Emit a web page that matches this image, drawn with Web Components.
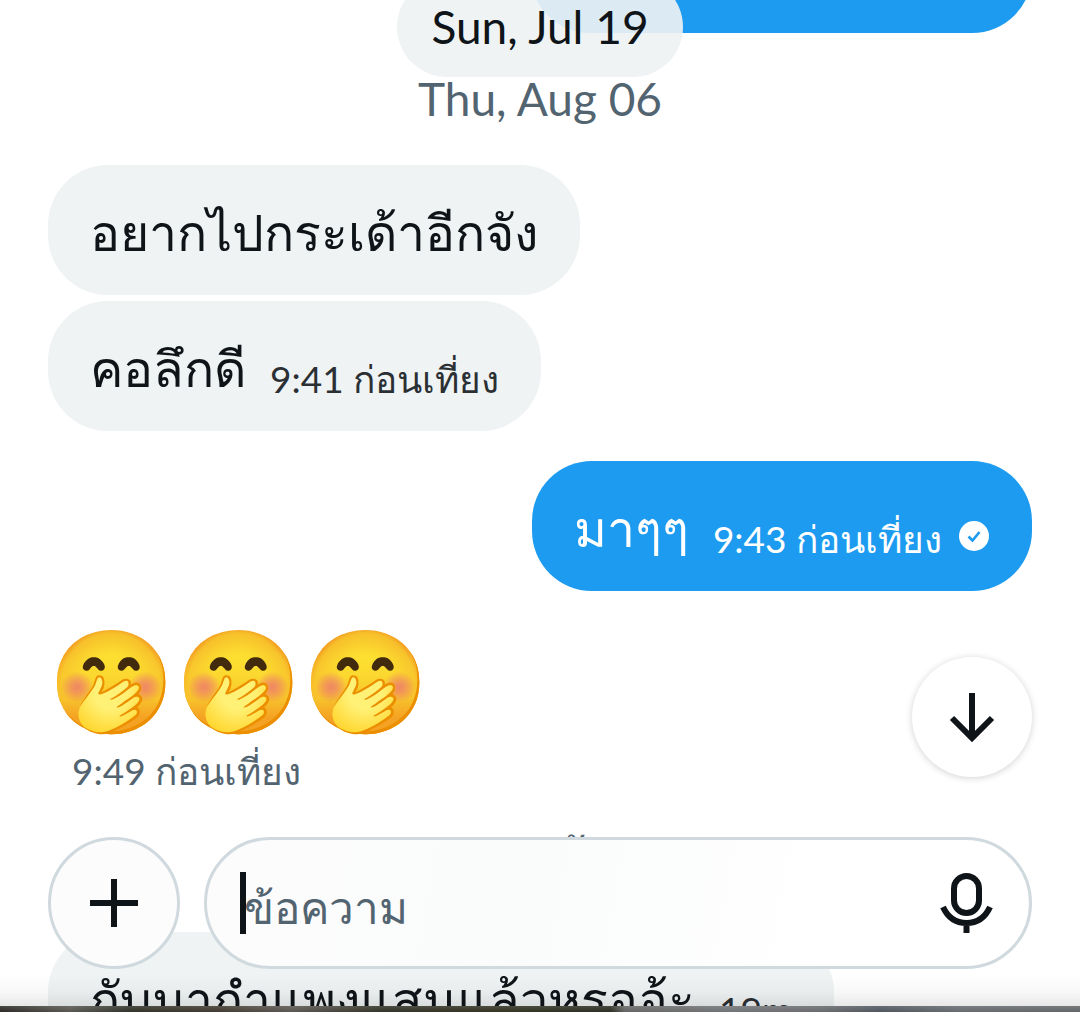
<!DOCTYPE html>
<html lang="th">
<head>
<meta charset="utf-8">
<meta name="viewport" content="width=device-width, initial-scale=1">
<title>ข้อความ</title>
<style>
  html, body { margin: 0; height: 100%; }
  body {
    font-family: Lato, sans-serif;
    --ink: #0f1419;
    --muted: #536471;
    --line: #cfd9de;
    --received: #eff3f4;
    --sent: #1d9bf0;
    color: var(--ink);
    background: #fff;
  }
</style>
</head>
<body>
<chat-screen>
  <chat-bubble sent class="previous"></chat-bubble>
  <day-label>Thu, Aug 06</day-label>
  <chat-bubble>อยากไปกระเด้าอีกจัง</chat-bubble>
  <chat-bubble time="9:41 ก่อนเที่ยง">คอลึกดี</chat-bubble>
  <chat-bubble sent time="9:43 ก่อนเที่ยง">มาๆๆ</chat-bubble>
  <emoji-message time="9:49 ก่อนเที่ยง">🤭🤭🤭</emoji-message>
  <day-label>วันนี้</day-label>
  <chat-bubble time="19m">กับมากำแพงแสนแล้วหรออ้ะ</chat-bubble>
  <floating-date slot="overlay">Sun, Jul 19</floating-date>
  <scroll-button slot="overlay"></scroll-button>
  <message-composer slot="overlay"></message-composer>
</chat-screen>

<script>
function define(name, markup, setup) {
  const template = document.createElement('template');
  template.innerHTML = markup;
  customElements.define(name, class extends HTMLElement {
    connectedCallback() {
      if (this.shadowRoot) return;
      const root = this.attachShadow({ mode: 'open' });
      root.append(template.content.cloneNode(true));
      if (setup) setup(this, root);
    }
  });
}

define('chat-screen', `
  <style>
    :host { display: block; position: relative; height: 100vh; overflow: hidden; background: #fff; }
    .thread { display: flex; flex-direction: column; align-items: flex-start; gap: 6px; padding: 0 48px; }
    .thread ::slotted([sent]) { align-self: flex-end; margin: 24px 0; }
    .thread ::slotted(.previous) { margin: -97px 0 0; width: 51%; }
    .thread ::slotted(day-label) { align-self: stretch; margin: -6px 0; }
    .shade, .photo { position: absolute; left: 0; right: 0; bottom: 0; }
    .shade { height: 38px; background: linear-gradient(rgba(0,0,0,0), rgba(0,0,0,.03) 50%, rgba(0,0,0,.12)); }
    .photo { height: 6px; background:
      linear-gradient(rgba(255,255,255,.16), rgba(255,255,255,.04)),
      linear-gradient(90deg, #24221d 0, #51504a 70px, #292a20 130px, #3b3329 220px, #54504a 290px,
        #2b2c1f 380px, #2b2c1a 500px, #24261a 610px, #5f605e 625px, #6c6d70 730px, #646568 820px,
        #485058 880px, #60656a 960px, #5d5f61 100%); }
  </style>
  <main class="thread"><slot></slot></main>
  <div class="shade"></div>
  <slot name="overlay"></slot>
  <div class="photo"></div>`);

define('day-label', `
  <style>
    :host { display: flex; align-items: center; justify-content: center; height: 132px;
      font-size: 46px; line-height: 56px; color: var(--muted); }
  </style>
  <slot></slot>`);

define('chat-bubble', `
  <style>
    :host { display: flex; box-sizing: border-box; align-items: flex-end; gap: 24px; height: 130px;
      padding: 0 42px 28px; border-radius: 60px; background: var(--received); white-space: nowrap; }
    :host([sent]) { background: var(--sent); color: #fff; }
    .text { font-size: 50px; line-height: 70px; }
    .meta { display: flex; align-items: center; gap: 16px; font-size: 37px; line-height: 48px; opacity: .88; }
    :host([sent]) .meta { opacity: 1; }
    svg { width: 32px; height: 32px; margin-bottom: 6px; }
    [hidden] { display: none; }
  </style>
  <span class="text"><slot></slot></span>
  <span class="meta" hidden><time></time>
    <svg viewBox="0 0 32 32" role="img" aria-label="ส่งแล้ว">
      <circle cx="16" cy="16" r="15" fill="#fff"/>
      <path d="M10.500 16.500l4 4 7-8.500" fill="none" stroke="#1d9bf0" stroke-width="2.600"/>
    </svg></span>`,
  (host, root) => {
    const time = host.getAttribute('time');
    root.querySelector('.meta').hidden = !time;
    root.querySelector('time').textContent = time || '';
    if (!host.hasAttribute('sent')) root.querySelector('svg').remove();
  });

define('emoji-message', `
  <style>
    :host { display: flex; flex-direction: column; gap: 10px; height: 179px; white-space: nowrap; }
    .emoji { font-size: 102px; line-height: 116px; }
    time { padding-left: 24px; font-size: 37px; line-height: 48px; color: var(--muted); }
  </style>
  <span class="emoji"><slot></slot></span><time></time>`,
  (host, root) => { root.querySelector('time').textContent = host.getAttribute('time'); });

define('floating-date', `
  <style>
    :host { position: absolute; top: -23px; left: 0; right: 0; display: flex; justify-content: center; }
    span { padding: 22px 34px; border-radius: 50px; font-size: 46px; line-height: 56px;
      background: rgba(238,242,243,.91); }
  </style>
  <span><slot></slot></span>`);

define('scroll-button', `
  <style>
    :host { position: absolute; right: 48px; bottom: 235px; }
    button { display: grid; place-items: center; width: 120px; height: 120px; padding: 0; border: 0;
      border-radius: 50%; background: #fff; color: inherit; box-shadow: 0 1px 7px rgba(0,0,0,.18); }
    svg { width: 60px; height: 60px; }
  </style>
  <button type="button" aria-label="เลื่อนลง">
    <svg viewBox="0 0 60 60" fill="none" stroke="currentColor" stroke-width="6">
      <path d="M30 6v45M10 31l20 20 20-20"/>
    </svg>
  </button>`);

define('message-composer', `
  <style>
    :host { position: absolute; left: 48px; right: 48px; bottom: 43px; display: flex; gap: 24px; }
    button { display: grid; place-items: center; padding: 0; border: 0; background: none; color: inherit; }
    .add, .field { box-sizing: border-box; height: 132px; border: 3px solid var(--line);
      border-radius: 66px; }
    .add { flex: none; width: 132px; background: #fcfcfc; }
    .field { flex: 1; min-width: 0; display: flex; align-items: center; padding: 0 32px 0 33px;
      background: linear-gradient(100deg, #fcfcfc, #fafbfb 40%, #fff 75%); }
    .caret { flex: none; width: 6px; height: 62px; margin-right: -2px; background: var(--ink); z-index: 1; }
    input { flex: 1; min-width: 0; height: 80px; padding: 8px 0 0; border: 0; outline: 0; background: none;
      font: 44px/72px Lato, sans-serif; color: var(--ink); }
    input::placeholder { color: var(--muted); opacity: 1; }
    svg { display: block; width: 60px; height: 64px; }
  </style>
  <button class="add" type="button" aria-label="เพิ่ม">
    <svg viewBox="0 0 60 64" fill="none" stroke="currentColor" stroke-width="6">
      <path d="M30 8v48M6 32h48"/>
    </svg>
  </button>
  <div class="field">
    <span class="caret"></span>
    <input type="text" placeholder="ข้อความ" aria-label="ข้อความ">
    <button type="button" aria-label="บันทึกเสียง">
      <svg viewBox="0 0 60 64" fill="none" stroke="currentColor" stroke-width="6">
        <rect x="17" y="5" width="25" height="37" rx="12.500"/>
        <path d="M6 36C11 47 19 52 29.500 52s18.500-5 23.500-16M29.500 52v10"/>
      </svg>
    </button>
  </div>`);
</script>
</body>
</html>
